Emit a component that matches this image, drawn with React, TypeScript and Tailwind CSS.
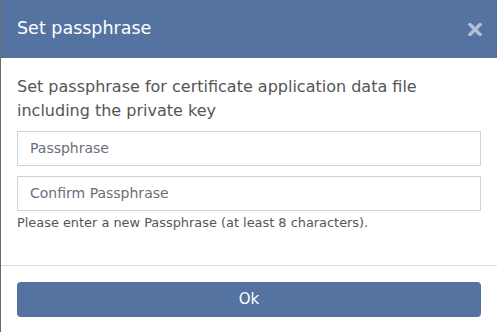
import React from "react";

export default function App() {
  const font = { fontFamily: '"DejaVu Sans", Verdana, sans-serif' };
  return (
    <div className="w-[497px] h-[332px] bg-white border-l border-[#6b6b6b] flex flex-col overflow-hidden" style={font}>
      <div className="h-[58px] bg-[#5473a0] flex items-center justify-between pl-[16px] pr-[15px] shrink-0">
        <span className="text-white text-[17.5px] leading-none">Set passphrase</span>
        <svg width="14" height="13" viewBox="0 0 14 13" className="opacity-55">
          <path d="M2 1.5 L12 11.5 M12 1.5 L2 11.5" stroke="#ffffff" strokeWidth="3.4" strokeLinecap="square" />
        </svg>
      </div>
      <div className="px-[16px] pt-[17px] flex flex-col">
        <p className="text-[#555555] text-[16px] leading-[24px]">
          Set passphrase for certificate application data file including the private key
        </p>
        <div className="mt-[8px] h-[35px] border border-[#cfd3d8] flex items-center px-[12px] text-[14px] text-[#6a6f78]">
          Passphrase
        </div>
        <div className="mt-[10px] h-[35px] border border-[#cfd3d8] flex items-center px-[12px] text-[14px] text-[#6a6f78]">
          Confirm Passphrase
        </div>
        <p className="mt-[4px] text-[12.9px] leading-[16px] text-[#555555]">
          Please enter a new Passphrase (at least 8 characters).
        </p>
      </div>
      <div className="mt-[34px] border-t border-[#dddddd]" />
      <div className="px-[16px] pt-[16px]">
        <div className="h-[35px] bg-[#5473a0] rounded-[4px] flex items-center justify-center text-white text-[15px]">
          Ok
        </div>
      </div>
    </div>
  );
}
